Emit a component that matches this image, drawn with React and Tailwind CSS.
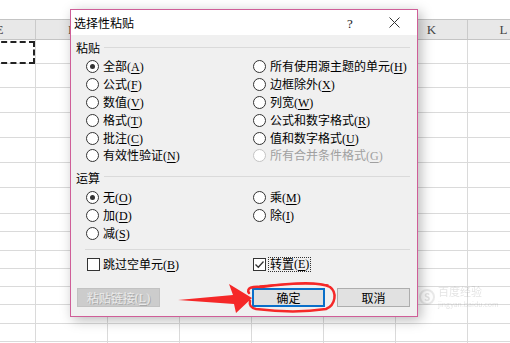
import React from "react";

const cols = ["E", "F", "G", "H", "I", "J", "K", "L"];
const rowHeights = [24, 24.3, 24.4, 25.3, 25, 25.5, 25.5, 18.3, 18.3, 18.3, 18.3, 18.3, 18.3, 18.3, 18.3];

const Key = ({ k }) => (
  <span className="font-['Liberation_Serif',serif]">
    (<span className="underline underline-offset-[2px]">{k}</span>)
  </span>
);

const Radio = ({ label, k, checked = false, disabled = false }) => (
  <div className="flex items-center h-[17.8px]">
    <span
      className={
        disabled
          ? "w-[13px] h-[13px] rounded-full border border-[#c4c4c4] bg-white shrink-0"
          : "w-[13px] h-[13px] rounded-full border border-[#333333] bg-white shrink-0 flex items-center justify-center"
      }
    >
      {checked && <span className="w-[5px] h-[5px] rounded-full bg-[#333333]" />}
    </span>
    <span className={disabled ? "ml-[4px] text-[#a0a0a0]" : "ml-[4px] text-black"}>
      {label}
      <Key k={k} />
    </span>
  </div>
);

const Check = ({ label, k, checked = false, focus = false }) => (
  <div className="flex items-center h-[18px]">
    <span className="w-[13px] h-[13px] border border-[#333333] bg-white shrink-0 flex items-center justify-center">
      {checked && (
        <svg width="11" height="11" viewBox="0 0 11 11">
          <path d="M1.5 5.5 L4.3 8.3 L9.5 2.5" fill="none" stroke="#333" strokeWidth="1.3" />
        </svg>
      )}
    </span>
    <span
      className={
        focus
          ? "ml-[2px] px-[1px] h-[15px] flex items-center border border-dotted border-[#333]"
          : "ml-[3px]"
      }
    >
      {label}
      <Key k={k} />
    </span>
  </div>
);

const GroupHead = ({ title }) => (
  <div className="flex items-center h-[18px] pl-[5px] pr-[7px]">
    <span>{title}</span>
    <div className="ml-[4px] flex-1 h-px bg-[#dadada] -mt-[2px]" />
  </div>
);

export default function App() {
  return (
    <div className="relative w-[510px] h-[343px] overflow-hidden bg-white font-['Noto_Sans_CJK_SC',sans-serif] text-[12px] leading-none">
      {/* sheet */}
      <div className="h-[19px]" />
      <div className="-ml-[36px] flex h-[21px] bg-[#e8e8e8] border-t border-b border-[#c4c4c4]">
        {cols.map((c) => (
          <div
            key={c}
            className="w-[72px] shrink-0 border-r border-[#cacaca] flex items-center justify-center font-['Liberation_Serif',serif] text-[13px] text-[#444]"
          >
            {c}
          </div>
        ))}
      </div>
      {rowHeights.map((h, r) => (
        <div key={r} className="-ml-[36px] flex border-b border-[#dadada]" style={{ height: h }}>
          {cols.map((c, i) => (
            <div key={c} className="w-[72px] shrink-0 border-r border-[#dadada]">
              {r === 0 && i === 0 && (
                <div className="h-full mt-[1px] h-[22px] border-2 border-dashed border-[#222]" />
              )}
            </div>
          ))}
        </div>
      ))}

      {/* watermark */}
      <div className="absolute left-[419px] top-[286px] flex items-center gap-[3px] opacity-20 text-[#777]">
        <span className="w-[16px] h-[16px] rounded-full border-2 border-[#999] flex items-center justify-center text-[10px] font-bold">S</span>
        <div className="flex flex-col gap-[4px]">
          <span className="text-[11px]">百度经验</span>
          <span className="text-[7px]">jingyan.baidu.com</span>
        </div>
      </div>

      {/* dialog */}
      <div className="absolute left-[70px] top-[9px] w-[348px] h-[308px] border border-[#cf5e98] bg-[#f0f0f0] shadow-[3px_3px_12px_rgba(0,0,0,0.28)] flex flex-col">
        <div className="h-[25px] bg-white flex items-center relative">
          <span className="pl-[3px] text-black">选择性粘贴</span>
          <span className="absolute left-[276px] top-[7px] font-['Liberation_Serif',serif] text-[13px] text-[#222]">?</span>
          <svg className="absolute left-[318px] top-[7px]" width="11" height="11" viewBox="0 0 11 11">
            <path d="M0.5 0.5 L10.5 10.5 M10.5 0.5 L0.5 10.5" stroke="#333" strokeWidth="1" />
          </svg>
        </div>

        <div className="flex flex-col text-black">
          <div className="mt-[4px]">
            <GroupHead title="粘贴" />
          </div>
          <div className="mt-[1px] grid grid-cols-[167px_1fr] pl-[15px]">
            <div className="flex flex-col">
              <Radio label="全部" k="A" checked />
              <Radio label="公式" k="F" />
              <Radio label="数值" k="V" />
              <Radio label="格式" k="T" />
              <Radio label="批注" k="C" />
              <Radio label="有效性验证" k="N" />
            </div>
            <div className="flex flex-col">
              <Radio label="所有使用源主题的单元" k="H" />
              <Radio label="边框除外" k="X" />
              <Radio label="列宽" k="W" />
              <Radio label="公式和数字格式" k="R" />
              <Radio label="值和数字格式" k="U" />
              <Radio label="所有合并条件格式" k="G" disabled />
            </div>
          </div>

          <div className="mt-[4px]">
            <GroupHead title="运算" />
          </div>
          <div className="mt-[2px] grid grid-cols-[167px_1fr] pl-[15px]">
            <div className="flex flex-col">
              <Radio label="无" k="O" checked />
              <Radio label="加" k="D" />
              <Radio label="减" k="S" />
            </div>
            <div className="flex flex-col">
              <Radio label="乘" k="M" />
              <Radio label="除" k="I" />
            </div>
          </div>

          <div className="mt-[7px] ml-[14px] mr-[7px] h-px bg-[#dadada]" />

          <div className="mt-[5px] grid grid-cols-[166px_1fr] pl-[16px]">
            <Check label="跳过空单元" k="B" />
            <Check label="转置" k="E" checked focus />
          </div>

          <div className="mt-[15px] flex pl-[6px]">
            <div className="w-[83px] h-[19px] bg-[#cccccc] border border-[#c2c2c2] flex items-center justify-center text-[#ebebeb] [text-shadow:1px_1px_0_#a9a9a9]">
              粘贴链接<Key k="L" />
            </div>
            <div className="ml-[92px] w-[73px] h-[19px] bg-[#e1e1e1] border-2 border-[#0a6fc9] flex items-center justify-center">
              确定
            </div>
            <div className="ml-[12px] w-[73px] h-[19px] bg-[#e1e1e1] border border-[#adadad] flex items-center justify-center">
              取消
            </div>
          </div>
        </div>
      </div>

      {/* red annotation */}
      <svg className="absolute left-0 top-0 pointer-events-none" width="510" height="343" viewBox="0 0 510 343">
        <path
          d="M249 293 C246 288 252 286 262 287 C290 283 318 281 330 287 C337 292 336 305 326 309 C300 313 272 311 256 309 C251 308 249 305 250 301"
          fill="none"
          stroke="#f52828"
          strokeWidth="2.5"
          strokeLinecap="round"
        />
        <path
          d="M260 286 C285 284 312 283 328 285"
          fill="none"
          stroke="#f52828"
          strokeWidth="1.5"
          strokeLinecap="round"
        />
        <path d="M178 300 L233 295 L229 284 L252 298 L236 313 L234 304 Z" fill="#f52828" />
      </svg>
    </div>
  );
}
